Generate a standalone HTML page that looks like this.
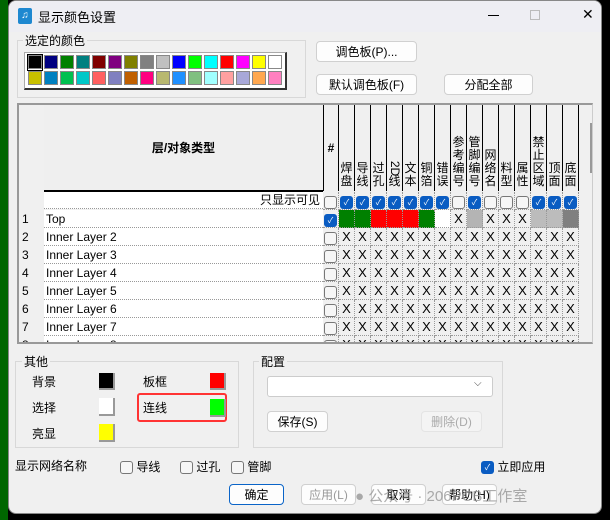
<!DOCTYPE html>
<html><head><meta charset="utf-8"><style>
*{box-sizing:border-box;margin:0;padding:0}
body{width:610px;height:520px;overflow:hidden;background:#000;position:relative;font-family:"Liberation Sans","Noto Sans CJK SC",sans-serif;font-size:12px;color:#000}
.a{position:absolute}
.win{left:8px;top:0;width:594px;height:514px;background:#f0f0f0;border-radius:8px;overflow:hidden;border:1px solid #888}
.title{left:0;top:0;width:594px;height:31px;background:#eeeef3}
.grp{border:1px solid #d8d8d8}
.lg{background:#f0f0f0;padding:0 2px;font-size:12px}
.btn{background:#fdfdfd;border:1px solid #d0d0d0;border-radius:4px;text-align:center;font-size:12px;line-height:20px}
.sw{width:14px;height:14px;border:1px solid #888}
.row{position:absolute;left:0;display:flex;height:18px}
.c{width:16px;height:18px;border-right:1px dotted #999;border-bottom:1px dotted #999;text-align:center;line-height:17px;font-size:13px;flex:none}
.rh{width:25px;flex:none;background:#f0f0f0;font-size:12px;line-height:18px;padding-left:3px;height:18px}
.nm{width:279px;flex:none;background:#fff;border-bottom:1px dotted #999;font-size:12px;line-height:18px;padding-left:2px;height:18px}
.cb{display:inline-block;width:13px;height:13px;border:1px solid #777;border-radius:3px;background:#f6f6f6;vertical-align:middle;margin-top:2px}
.ck{display:inline-block;width:13px;height:13px;border-radius:3px;background:#0a5cc2;vertical-align:middle;margin-top:2px;color:#fff;font-size:8px;line-height:13px}
.vh{width:16px;height:86px;border-right:1px solid #000;flex:none;background:#f0f0f0;position:relative;overflow:hidden}
.vh span{position:absolute;left:0;width:15px;bottom:3px;text-align:center;font-size:12px;line-height:13px}
.r2{display:inline-block;transform:rotate(90deg);font-size:11px}
</style></head><body>
<div class="a" style="left:0;top:0;width:8px;height:520px;background:#060"></div>
<div class="a win">
 <div class="a title"></div>
 <div class="a" style="left:9px;top:7px;width:14px;height:16px;background:#1e88d0;border-radius:2px;color:#fff;font-size:10px;line-height:16px;text-align:center">♫</div>
 <div class="a" style="left:29px;top:6px;font-size:13px">显示颜色设置</div>
 <div class="a" style="left:479px;top:14px;width:11px;height:1px;background:#000"></div>
 <div class="a" style="left:521px;top:9px;width:10px;height:10px;border:1px solid #bbb"></div>
 <div class="a" style="left:573px;top:5px;font-size:14px;font-weight:normal">✕</div>

 <div class="a grp" style="left:8px;top:39px;width:289px;height:58px"></div>
 <div class="a lg" style="left:14px;top:31px">选定的颜色</div>
 <div class="a" style="left:15px;top:51px;width:263px;height:38px;background:#fff;border:1px solid #aaa;border-right:2px solid #333;border-bottom:2px solid #333"></div>
 <div class="a" style="left:18px;top:53px;width:16px;height:17px;border:1px solid #000"></div>
 <div class="a" id="pal" style="left:19px;top:54px;display:grid;grid-template-columns:repeat(16,16px);grid-auto-rows:16px">
  <div class="sw" style="background:#000"></div><div class="sw" style="background:#000080"></div><div class="sw" style="background:#008000"></div><div class="sw" style="background:#008080"></div><div class="sw" style="background:#800000"></div><div class="sw" style="background:#800080"></div><div class="sw" style="background:#808000"></div><div class="sw" style="background:#808080"></div><div class="sw" style="background:#c0c0c0"></div><div class="sw" style="background:#00f"></div><div class="sw" style="background:#0f0"></div><div class="sw" style="background:#0ff"></div><div class="sw" style="background:#f00"></div><div class="sw" style="background:#f0f"></div><div class="sw" style="background:#ff0"></div><div class="sw" style="background:#fff"></div>
  <div class="sw" style="background:#c8c000"></div><div class="sw" style="background:#0080c0"></div><div class="sw" style="background:#00c050"></div><div class="sw" style="background:#00c8c8"></div><div class="sw" style="background:#ff6060"></div><div class="sw" style="background:#8080c0"></div><div class="sw" style="background:#c06000"></div><div class="sw" style="background:#ff0080"></div><div class="sw" style="background:#b8b870"></div><div class="sw" style="background:#2090ff"></div><div class="sw" style="background:#80c080"></div><div class="sw" style="background:#a0ffff"></div><div class="sw" style="background:#ffa0a0"></div><div class="sw" style="background:#a8a8d8"></div><div class="sw" style="background:#ffa850"></div><div class="sw" style="background:#ff80c0"></div>
 </div>
 <div class="a btn" style="left:307px;top:40px;width:101px;height:21px">调色板(P)...</div>
 <div class="a btn" style="left:307px;top:73px;width:101px;height:21px">默认调色板(F)</div>
 <div class="a btn" style="left:435px;top:73px;width:89px;height:21px">分配全部</div>

 <!-- table -->
 <div class="a" style="left:8px;top:102px;width:576px;height:241px;border:2px solid #999;border-right:1px solid #ccc;background:#f0f0f0;overflow:hidden">
  <div class="a" style="left:0;top:0;display:flex;height:87px">
   <div style="width:25px;background:#f0f0f0"></div>
   <div style="width:279px;background:#efefef;border-bottom:2px solid #000;text-align:center;line-height:86px;font-weight:bold;font-size:12px">层/对象类型</div>
   <div class="vh" style="text-align:center;line-height:86px;font-weight:bold;border-left:1px solid #000">#</div>
   <div class="vh"><span>焊<br>盘</span></div><div class="vh"><span>导<br>线</span></div><div class="vh"><span>过<br>孔</span></div><div class="vh"><span><span class="r2" style="position:static;width:auto">2D</span><br>线</span></div><div class="vh"><span>文<br>本</span></div><div class="vh"><span>铜<br>箔</span></div><div class="vh"><span>错<br>误</span></div><div class="vh"><span>参<br>考<br>编<br>号</span></div><div class="vh"><span>管<br>脚<br>编<br>号</span></div><div class="vh"><span>网<br>络<br>名</span></div><div class="vh"><span>料<br>型</span></div><div class="vh"><span>属<br>性</span></div><div class="vh"><span>禁<br>止<br>区<br>域</span></div><div class="vh"><span>顶<br>面</span></div><div class="vh"><span>底<br>面</span></div>
  </div>
  <div class="row" style="top:87px;height:17px"><div class="rh"></div><div class="nm" style="text-align:right;padding-right:3px;height:17px;line-height:17px">只显示可见</div>
   <div class="c"><span class="cb"></span></div><div class="c"><span class="ck">✓</span></div><div class="c"><span class="ck">✓</span></div><div class="c"><span class="ck">✓</span></div><div class="c"><span class="ck">✓</span></div><div class="c"><span class="ck">✓</span></div><div class="c"><span class="ck">✓</span></div><div class="c"><span class="ck">✓</span></div><div class="c"><span class="cb"></span></div><div class="c"><span class="ck">✓</span></div><div class="c"><span class="cb"></span></div><div class="c"><span class="cb"></span></div><div class="c"><span class="cb"></span></div><div class="c"><span class="ck">✓</span></div><div class="c"><span class="ck">✓</span></div><div class="c"><span class="ck">✓</span></div></div>
  <div class="row" style="top:105px"><div class="rh">1</div><div class="nm">Top</div>
   <div class="c"><span class="ck">✓</span></div><div class="c" style="background:#008000"></div><div class="c" style="background:#008000"></div><div class="c" style="background:#f00"></div><div class="c" style="background:#f00"></div><div class="c" style="background:#f00"></div><div class="c" style="background:#008000"></div><div class="c" style="background:#fff"></div><div class="c">X</div><div class="c" style="background:#b4b4b4"></div><div class="c">X</div><div class="c">X</div><div class="c">X</div><div class="c" style="background:#bcbcbc"></div><div class="c" style="background:#bcbcbc"></div><div class="c" style="background:#808080"></div></div>
  <div class="row" style="top:123px"><div class="rh">2</div><div class="nm">Inner Layer 2</div><div class="c"><span class="cb"></span></div><div class="c">X</div><div class="c">X</div><div class="c">X</div><div class="c">X</div><div class="c">X</div><div class="c">X</div><div class="c">X</div><div class="c">X</div><div class="c">X</div><div class="c">X</div><div class="c">X</div><div class="c">X</div><div class="c">X</div><div class="c">X</div><div class="c">X</div></div>
  <div class="row" style="top:141px"><div class="rh">3</div><div class="nm">Inner Layer 3</div><div class="c"><span class="cb"></span></div><div class="c">X</div><div class="c">X</div><div class="c">X</div><div class="c">X</div><div class="c">X</div><div class="c">X</div><div class="c">X</div><div class="c">X</div><div class="c">X</div><div class="c">X</div><div class="c">X</div><div class="c">X</div><div class="c">X</div><div class="c">X</div><div class="c">X</div></div>
  <div class="row" style="top:159px"><div class="rh">4</div><div class="nm">Inner Layer 4</div><div class="c"><span class="cb"></span></div><div class="c">X</div><div class="c">X</div><div class="c">X</div><div class="c">X</div><div class="c">X</div><div class="c">X</div><div class="c">X</div><div class="c">X</div><div class="c">X</div><div class="c">X</div><div class="c">X</div><div class="c">X</div><div class="c">X</div><div class="c">X</div><div class="c">X</div></div>
  <div class="row" style="top:177px"><div class="rh">5</div><div class="nm">Inner Layer 5</div><div class="c"><span class="cb"></span></div><div class="c">X</div><div class="c">X</div><div class="c">X</div><div class="c">X</div><div class="c">X</div><div class="c">X</div><div class="c">X</div><div class="c">X</div><div class="c">X</div><div class="c">X</div><div class="c">X</div><div class="c">X</div><div class="c">X</div><div class="c">X</div><div class="c">X</div></div>
  <div class="row" style="top:195px"><div class="rh">6</div><div class="nm">Inner Layer 6</div><div class="c"><span class="cb"></span></div><div class="c">X</div><div class="c">X</div><div class="c">X</div><div class="c">X</div><div class="c">X</div><div class="c">X</div><div class="c">X</div><div class="c">X</div><div class="c">X</div><div class="c">X</div><div class="c">X</div><div class="c">X</div><div class="c">X</div><div class="c">X</div><div class="c">X</div></div>
  <div class="row" style="top:213px"><div class="rh">7</div><div class="nm">Inner Layer 7</div><div class="c"><span class="cb"></span></div><div class="c">X</div><div class="c">X</div><div class="c">X</div><div class="c">X</div><div class="c">X</div><div class="c">X</div><div class="c">X</div><div class="c">X</div><div class="c">X</div><div class="c">X</div><div class="c">X</div><div class="c">X</div><div class="c">X</div><div class="c">X</div><div class="c">X</div></div>
  <div class="row" style="top:231px"><div class="rh">8</div><div class="nm">Inner Layer 8</div><div class="c"><span class="cb"></span></div><div class="c">X</div><div class="c">X</div><div class="c">X</div><div class="c">X</div><div class="c">X</div><div class="c">X</div><div class="c">X</div><div class="c">X</div><div class="c">X</div><div class="c">X</div><div class="c">X</div><div class="c">X</div><div class="c">X</div><div class="c">X</div><div class="c">X</div></div>
  <div class="a" style="left:571px;top:18px;width:2px;height:50px;background:#999"></div>
 </div>

 <!-- 其他 -->
 <div class="a grp" style="left:6px;top:360px;width:224px;height:87px"></div>
 <div class="a lg" style="left:13px;top:352px">其他</div>
 <div class="a" style="left:23px;top:372px">背景</div><div class="a" style="left:90px;top:372px;width:16px;height:17px;background:#000;border-right:2px solid #999;border-bottom:2px solid #999"></div>
 <div class="a" style="left:23px;top:398px">选择</div><div class="a" style="left:90px;top:397px;width:16px;height:18px;background:#fff;border-right:2px solid #999;border-bottom:2px solid #999"></div>
 <div class="a" style="left:23px;top:424px">亮显</div><div class="a" style="left:90px;top:423px;width:16px;height:18px;background:#ff0;border-right:2px solid #999;border-bottom:2px solid #999"></div>
 <div class="a" style="left:134px;top:372px">板框</div><div class="a" style="left:201px;top:372px;width:16px;height:17px;background:#f00;border-right:2px solid #999;border-bottom:2px solid #999"></div>
 <div class="a" style="left:128px;top:392px;width:90px;height:29px;border:2px solid #f33;border-radius:3px"></div>
 <div class="a" style="left:134px;top:398px">连线</div><div class="a" style="left:201px;top:398px;width:16px;height:18px;background:#0f0;border-right:2px solid #999;border-bottom:2px solid #999"></div>

 <!-- 配置 -->
 <div class="a grp" style="left:244px;top:360px;width:250px;height:87px"></div>
 <div class="a lg" style="left:250px;top:352px">配置</div>
 <div class="a" style="left:258px;top:375px;width:226px;height:21px;background:#fff;border:1px solid #ccc;border-radius:3px"></div>
 <div class="a" style="left:465px;top:377px;font-size:10px;color:#444">⌵</div>
 <div class="a btn" style="left:258px;top:410px;width:61px;height:21px">保存(S)</div>
 <div class="a btn" style="left:412px;top:410px;width:61px;height:21px;color:#aaa;background:#f4f4f4;border-color:#e4e4e4">删除(D)</div>

 <div class="a" style="left:6px;top:456px">显示网络名称</div>
 <div class="a" style="left:111px;top:457px"><span class="cb" style="margin:0"></span> 导线</div>
 <div class="a" style="left:171px;top:457px"><span class="cb" style="margin:0"></span> 过孔</div>
 <div class="a" style="left:222px;top:457px"><span class="cb" style="margin:0"></span> 管脚</div>
 <div class="a" style="left:472px;top:457px"><span class="ck" style="margin:0;text-align:center">✓</span> 立即应用</div>

 <div class="a btn" style="left:220px;top:483px;width:55px;height:21px;border-color:#0a64c8">确定</div>
 <div class="a btn" style="left:292px;top:483px;width:55px;height:21px;color:#999">应用(L)</div>
 <div class="a btn" style="left:362px;top:483px;width:55px;height:21px">取消</div>
 <div class="a btn" style="left:433px;top:483px;width:55px;height:21px">帮助(H)</div>
 <div class="a" style="left:346px;top:484px;font-size:15px;color:rgba(150,150,150,0.8)">● 公众号 · 206PCB工作室</div>
</div>
</body></html>
